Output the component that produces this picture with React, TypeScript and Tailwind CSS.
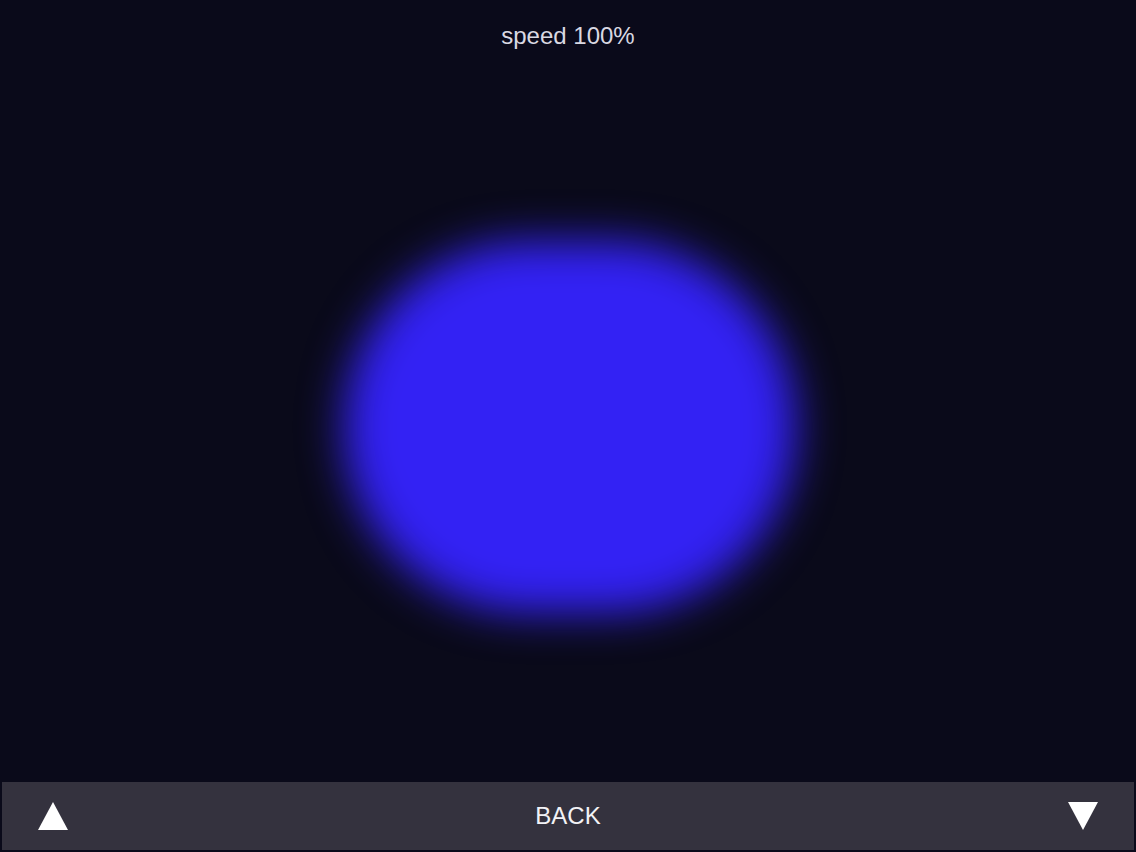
import React from "react";

export default function App() {
  return (
    <div
      className="w-[1136px] h-[852px] bg-[#0a0a1a] flex flex-col overflow-hidden"
      style={{ fontFamily: '"Liberation Sans", Arial, sans-serif' }}
    >
      <div className="h-[72px] flex items-center justify-center text-[24px] text-[#d9d8e2]">
        speed 100%
      </div>
      <div className="flex-1 flex items-center justify-center">
        <div className="w-[452px] h-[372px] rounded-full bg-[#3322f4] blur-[22px] ml-[4px]" />
      </div>
      <div className="mx-[2px] mb-[2px] h-[68px] bg-[#34323e] flex items-center justify-between px-[36px]">
        <svg width="30" height="28" viewBox="0 0 30 28">
          <polygon points="15,0 30,28 0,28" fill="#ffffff" />
        </svg>
        <span className="text-[24px] text-[#f2f2f6]">BACK</span>
        <svg width="30" height="28" viewBox="0 0 30 28">
          <polygon points="0,0 30,0 15,28" fill="#ffffff" />
        </svg>
      </div>
    </div>
  );
}
